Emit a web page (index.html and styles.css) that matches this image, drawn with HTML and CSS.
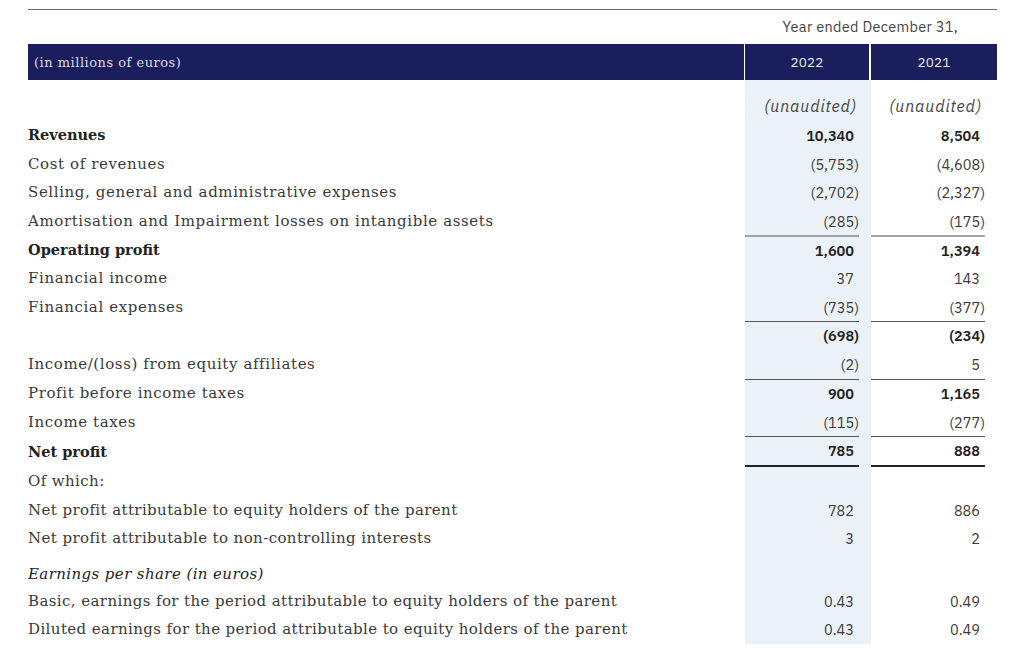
FILE: index.html
```html
<!DOCTYPE html>
<html lang="en">
<head>
<meta charset="utf-8">
<link rel="stylesheet" href="styles.css">
</head>
<body>
<div class="wrap">
  <div class="rule"></div>
  <div class="caption">Year ended December 31,</div>
  <table class="fin">
    <thead>
      <tr class="hdr">
        <th class="lbl">(in millions of euros)</th>
        <th class="yr y1">2022</th>
        <th class="yr y2">2021</th>
      </tr>
    </thead>
    <tbody>
      <tr class="unaud"><td></td><td class="c1"><div class="v it">(unaudited)</div></td><td class="c2"><div class="v it">(unaudited)</div></td></tr>
      <tr class="b"><td class="lbl">Revenues</td><td class="c1"><div class="v np">10,340</div></td><td class="c2"><div class="v np">8,504</div></td></tr>
      <tr><td class="lbl">Cost of revenues</td><td class="c1"><div class="v">(5,753)</div></td><td class="c2"><div class="v">(4,608)</div></td></tr>
      <tr><td class="lbl">Selling, general and administrative expenses</td><td class="c1"><div class="v">(2,702)</div></td><td class="c2"><div class="v">(2,327)</div></td></tr>
      <tr><td class="lbl">Amortisation and Impairment losses on intangible assets</td><td class="c1"><div class="v">(285)</div></td><td class="c2"><div class="v">(175)</div></td></tr>
      <tr class="b"><td class="lbl">Operating profit</td><td class="c1"><div class="v np top g">1,600</div></td><td class="c2"><div class="v np top g">1,394</div></td></tr>
      <tr><td class="lbl">Financial income</td><td class="c1"><div class="v np">37</div></td><td class="c2"><div class="v np">143</div></td></tr>
      <tr><td class="lbl">Financial expenses</td><td class="c1"><div class="v">(735)</div></td><td class="c2"><div class="v">(377)</div></td></tr>
      <tr class="b"><td class="lbl"></td><td class="c1"><div class="v top d">(698)</div></td><td class="c2"><div class="v top d">(234)</div></td></tr>
      <tr><td class="lbl">Income/(loss) from equity affiliates</td><td class="c1"><div class="v">(2)</div></td><td class="c2"><div class="v np">5</div></td></tr>
      <tr><td class="lbl">Profit before income taxes</td><td class="c1"><div class="v np top d sb">900</div></td><td class="c2"><div class="v np top d sb">1,165</div></td></tr>
      <tr><td class="lbl">Income taxes</td><td class="c1"><div class="v">(115)</div></td><td class="c2"><div class="v">(277)</div></td></tr>
      <tr class="b"><td class="lbl">Net profit</td><td class="c1"><div class="v np top d bot sb">785</div></td><td class="c2"><div class="v np top d bot sb">888</div></td></tr>
      <tr class="sub"><td class="lbl">Of which:</td><td class="c1"></td><td class="c2"></td></tr>
      <tr class="sub"><td class="lbl">Net profit attributable to equity holders of the parent</td><td class="c1"><div class="v np">782</div></td><td class="c2"><div class="v np">886</div></td></tr>
      <tr class="sub"><td class="lbl">Net profit attributable to non-controlling interests</td><td class="c1"><div class="v np">3</div></td><td class="c2"><div class="v np">2</div></td></tr>
      <tr class="sub eps"><td class="lbl"><em>Earnings per share (in euros)</em></td><td class="c1"></td><td class="c2"></td></tr>
      <tr class="sub"><td class="lbl">Basic, earnings for the period attributable to equity holders of the parent</td><td class="c1"><div class="v np">0.43</div></td><td class="c2"><div class="v np">0.49</div></td></tr>
      <tr class="sub"><td class="lbl">Diluted earnings for the period attributable to equity holders of the parent</td><td class="c1"><div class="v np">0.43</div></td><td class="c2"><div class="v np">0.49</div></td></tr>
    </tbody>
  </table>
</div>
</body>
</html>
```
FILE: styles.css
```css
html, body { margin: 0; padding: 0; background: #fff; }
.wrap { width: 969px; margin-left: 28px; padding-top: 9px; }
.rule { height: 1px; background: #6b6b6b; }
.caption {
  font-family: "IBM Plex Sans", Inter, "Liberation Sans", sans-serif;
  font-size: 14.5px;
  letter-spacing: 0.3px;
  color: #444;
  text-align: right;
  padding-right: 39px;
  height: 34px;
  line-height: 34px;
}
.fin {
  width: 969px;
  border-collapse: separate;
  border-spacing: 0;
  table-layout: fixed;
}
.fin td, .fin th { padding: 0; }
.hdr { height: 36px; background: #1b1e5c; }
.hdr th { font-weight: normal; }
.hdr .lbl {
  width: 710px;
  text-align: left;
  padding-left: 6px;
  padding-top: 0;
  font-family: "DejaVu Serif", serif;
  font-size: 13px;
  letter-spacing: 0.5px;
  color: #d9dce8;
  border-right: 1px solid #fff;
}
.hdr .yr {
  font-family: "IBM Plex Sans", Inter, "Liberation Sans", sans-serif;
  font-size: 13.5px;
  letter-spacing: 0.2px;
  color: #e6e7ef;
}
.hdr .y1 { width: 124px; border-right: 2px solid #fff; }
.hdr .y2 { width: 126px; }

.fin tbody tr { height: 28.7px; }
.fin tbody tr.unaud { height: 40.5px; }
.fin tbody tr.unaud td { vertical-align: bottom; padding-bottom: 5px; }
.fin tbody tr.eps { height: 33.5px; }
.fin tbody tr.eps td { vertical-align: bottom; padding-bottom: 3px; }

.fin .c1 { background: #ebf2f7; padding-right: 12px; }
.fin .c2 { padding-right: 12px; }

.lbl {
  font-family: "DejaVu Serif", serif;
  font-size: 15px;
  letter-spacing: 0.6px;
  color: #3a3a3a;
  white-space: nowrap;
  padding-top: 2px;
}
tr.b .lbl { font-weight: bold; font-size: 14.5px; color: #222; letter-spacing: 0; }
tr.sub .lbl { letter-spacing: 0.4px; }
.lbl em { font-style: italic; color: #222; }

.v {
  font-family: "IBM Plex Sans", Inter, "Liberation Sans", sans-serif;
  font-size: 14.5px;
  color: #3a3a3a;
  text-align: right;
  height: 28px;
  line-height: 29px;
}
.v.np { padding-right: 5px; }
tr.b .v, .v.sb { font-weight: 600; color: #222; }
.v.it {
  font-style: italic;
  font-size: 16px;
  letter-spacing: 0.9px;
  color: #444;
  line-height: 20px;
  height: 20px;
  padding-right: 2px;
}
.c2 .v.it { padding-right: 3px; }
.v.top.g { border-top: 2px solid #a4a4a4; height: 26.7px; line-height: 27.7px; }
.v.top.d { border-top: 1px solid #555; height: 27.7px; line-height: 28.7px; }
.v.bot { border-bottom: 2px solid #222; height: 25.7px; line-height: 28px; }
```
